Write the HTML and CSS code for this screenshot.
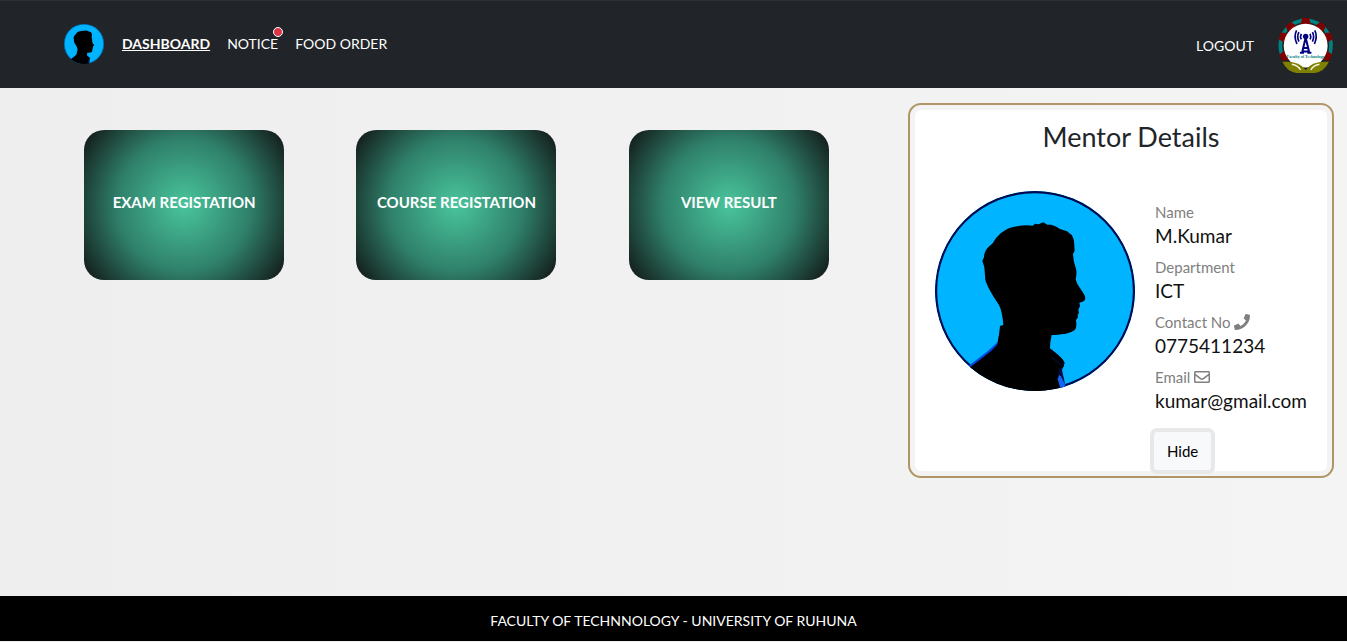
FILE: index.html
```html
<!DOCTYPE html>
<html lang="en">
<head>
<meta charset="utf-8">
<meta name="viewport" content="width=device-width, initial-scale=1">
<title>Dashboard</title>
<link rel="stylesheet" href="styles.css">
</head>
<body>
<svg class="defs" aria-hidden="true">
  <symbol id="profile" viewBox="45 33 600 600">
    <clipPath id="round"><circle cx="345" cy="333" r="300"/></clipPath>
    <g clip-path="url(#round)">
      <rect x="45" y="33" width="600" height="600" fill="#00b4ff"/>
      <circle class="rim" cx="345" cy="333" r="297" fill="none" stroke="#000a50" stroke-width="7"/>
      <path d="M140 562L200 516L234 485L220 570L165 600Z" fill="#0548e8"/>
      <path d="M388 505Q420 525 434 548L426 570L438 625L415 633L380 560Z" fill="#020b45"/>
      <path d="M412 588L420 586L436 622L424 626Z" fill="#1268f5"/>
      <path d="M240 438L250 435Q247 395 237 375C222 352 204 326 196 300L193 262L187 242L192 232Q192 214 206 200L218 190Q226 174 242 160Q262 144 280 141Q310 134 338 137L345 131L356 133L370 127L382 134L394 134L409 140L420 147L441 154L456 166Q464 180 463 200L464 212L459 222Q460 246 467 263Q472 276 467 298C471 315 483 326 490 340Q499 352 494 361Q490 367 478 368L480 378L475 389L477 399L473 404L474 412L468 420Q471 440 466 448Q458 457 438 461Q410 465 395 465Q390 485 390 505L412 524Q430 536 433 549L430 562L416 568L415 590L426 640H150V562Q186 535 213 513L231 495Q238 462 240 438Z" fill="#000"/>
      <path d="M396 532L424 556L430 548" fill="none" stroke="#031058" stroke-width="3"/>
      <path d="M414 594L423 624M420 588L435 617" fill="none" stroke="#1268f5" stroke-width="4"/>
    </g>
  </symbol>
</svg>

<header class="topbar">
  <nav class="menu" aria-label="Main">
    <a class="avatar" href="#profile" aria-label="Profile"><svg><use href="#profile"/></svg></a>
    <a class="menu-link active" href="#dashboard">DASHBOARD</a>
    <a class="menu-link" href="#notice">NOTICE<span class="dot"></span></a>
    <a class="menu-link" href="#food">FOOD ORDER</a>
  </nav>
  <div class="session">
    <a class="menu-link" href="#logout">LOGOUT</a>
    <svg class="crest" viewBox="25 24 163 163" role="img" aria-label="Faculty of Technology">
      <path d="M43 145A75 75 0 1 1 171 145" fill="none" stroke="#008080" stroke-width="11"/>
      <g fill="#800000">
        <path id="tooth" d="M93 38L97 24H117L121 38V43H93Z"/>
        <use href="#tooth" transform="rotate(39 107 106)"/>
        <use href="#tooth" transform="rotate(-39 107 106)"/>
        <use href="#tooth" transform="rotate(69 107 106)"/>
        <use href="#tooth" transform="rotate(-69 107 106)"/>
        <use href="#tooth" transform="rotate(116 107 106)"/>
        <use href="#tooth" transform="rotate(-116 107 106)"/>
      </g>
      <circle cx="107" cy="106" r="65" fill="#fff"/>
      <g fill="none" stroke="#000080" stroke-width="5">
        <path d="M107 82L97 124M107 82L117 124M99 113H115M90 127H102M112 127H124M96 123H118" stroke-width="6"/>
        <path d="M94 71Q90 79 94 87M120 71Q124 79 120 87M87 66Q80 79 87 94M127 66Q134 79 127 94M80 61Q71 79 81 101M134 61Q143 79 133 101"/>
      </g>
      <circle cx="107" cy="79" r="8" fill="#000080"/>
      <text class="crest-text" x="107" y="144" text-anchor="middle">Faculty of Technology</text>
      <path d="M38 154Q88 150 107 178Q126 150 176 154Q162 184 134 187H80Q52 184 38 154Z" fill="#808000"/>
      <path d="M66 161Q84 164 92 178M148 161Q130 164 122 178" fill="none" stroke="#f4f4dc" stroke-width="4"/>
    </svg>
  </div>
</header>

<main class="content">
  <section class="tiles" aria-label="Services">
    <a class="tile" href="#exam">EXAM REGISTATION</a>
    <a class="tile" href="#course">COURSE REGISTATION</a>
    <a class="tile" href="#result">VIEW RESULT</a>
  </section>
  <aside class="mentor">
    <h1 class="mentor-title">Mentor Details</h1>
    <div class="mentor-body">
      <svg class="portrait" role="img" aria-label="Mentor photo"><use href="#profile"/></svg>
      <div class="info">
        <dl class="details">
          <dt>Name</dt><dd>M.Kumar</dd>
          <dt>Department</dt><dd>ICT</dd>
          <dt>Contact No <svg class="icon" viewBox="0 0 512 512" aria-hidden="true"><path d="M493.4 24.6l-104-24c-11.3-2.6-22.9 3.3-27.5 13.9l-48 112c-4.2 9.8-1.4 21.3 6.9 28l60.6 49.6c-36 76.7-98.9 140.5-177.2 177.2l-49.6-60.6c-6.8-8.3-18.2-11.1-28-6.9l-112 48C3.9 366.5-2 378.1.6 389.4l24 104C27.1 504.2 36.7 512 48 512c256.1 0 464-207.5 464-464 0-11.2-7.7-20.9-18.6-23.4z"/></svg></dt><dd>0775411234</dd>
          <dt>Email <svg class="icon" viewBox="0 0 512 512" aria-hidden="true"><path d="M464 64H48C21.49 64 0 85.49 0 112v288c0 26.51 21.49 48 48 48h416c26.51 0 48-21.49 48-48V112c0-26.51-21.49-48-48-48zm0 48v40.805c-22.422 18.259-58.168 46.651-134.587 106.49-16.841 13.247-50.201 45.072-73.413 44.701-23.208.375-56.579-31.459-73.413-44.701C106.18 199.465 70.425 171.067 48 152.805V112h416zM48 400V214.398c22.914 18.251 55.409 43.862 104.938 82.646 21.857 17.205 60.134 55.186 103.062 54.955 42.717.231 80.509-37.199 103.053-54.947 49.528-38.783 82.032-64.401 104.947-82.653V400H48z"/></svg></dt><dd>kumar@gmail.com</dd>
        </dl>
        <button class="hide" type="button">Hide</button>
      </div>
    </div>
  </aside>
</main>

<footer class="footer">FACULTY OF TECHNNOLOGY - UNIVERSITY OF RUHUNA</footer>
</body>
</html>
```

FILE: styles.css
```css
* { box-sizing: border-box; }

body {
  margin: 0;
  min-height: 100vh;
  padding-bottom: 1px;
  display: flex;
  flex-direction: column;
  background: linear-gradient(90deg, #eeeeee, #f4f4f4);
  color: #212529;
  font-family: Candara, Lato, "Open Sans", sans-serif;
  font-size: 14px;
  line-height: 24px;
}

.defs { position: absolute; width: 0; height: 0; }

.topbar {
  display: flex;
  justify-content: space-between;
  align-items: center;
  height: 88px;
  padding: 0 14px 0 64px;
  background: #212529;
  border-top: 1px solid #303030;
}

.menu { display: flex; align-items: center; gap: 17px; padding-bottom: 2px; }
.avatar { width: 40px; height: 40px; margin-right: 1px; }
.avatar svg { display: block; width: 100%; height: 100%; }
.menu-link { position: relative; color: #fff; text-decoration: none; }
.active { font-weight: 700; text-decoration: underline; }

.dot {
  position: absolute;
  top: -5px;
  right: -5px;
  width: 10px;
  height: 10px;
  border: 1px solid #fff;
  border-radius: 50%;
  background: #dc3545;
}

.session { display: flex; align-items: center; gap: 24px; padding-top: 2px; }
.crest { width: 55px; height: 55px; }
.crest-text { font: 700 12px "Liberation Serif", serif; fill: #008080; }

.content {
  flex: 1;
  display: grid;
  grid-template-columns: 1fr 426px;
  align-items: start;
  gap: 43px;
  padding: 15px 13px 24px 48px;
}

.tiles {
  display: grid;
  grid-template-columns: repeat(3, 1fr);
  justify-items: center;
  padding-top: 27px;
}

.tile {
  display: flex;
  align-items: center;
  justify-content: center;
  width: 200px;
  height: 150px;
  padding-bottom: 6px;
  border-radius: 20px;
  background: radial-gradient(circle, #49c59c 0%, #2f806a 53%, #111414 100%);
  color: #fff;
  font-size: 15px;
  font-weight: 700;
  text-decoration: none;
}

.mentor {
  padding: 15px 12px 0 20px;
  border: 2px solid #b09666;
  border-radius: 13px;
  background: #fff;
  box-shadow: inset 0 0 0 5px #f3f3f3;
}

.mentor-title {
  margin: 0;
  padding-left: 12px;
  font-size: 27px;
  font-weight: 400;
  line-height: 34px;
  text-align: center;
}

.mentor-body { display: flex; gap: 20px; padding: 37px 0 2px 5px; }
.portrait { flex: none; width: 200px; height: 200px; }
.details { margin: 0; padding-top: 9px; }
.details dt { color: #808080; font-size: 15px; line-height: 24px; }
.details dd { margin: 0 0 7px; color: #111; font-size: 19px; line-height: 24px; }
.icon { width: 16px; height: 16px; vertical-align: -2px; fill: currentColor; }

.hide {
  display: block;
  margin: 15px 0 0 -5px;
  padding: 7px 13px;
  border: 4px solid #e8e8e8;
  border-radius: 7px;
  background: #f8f9fa;
  color: #000;
  font: inherit;
  font-size: 15px;
  line-height: 24px;
}

.footer {
  padding: 13px 0 8px;
  background: #000;
  color: #fff;
  text-align: center;
}
```
